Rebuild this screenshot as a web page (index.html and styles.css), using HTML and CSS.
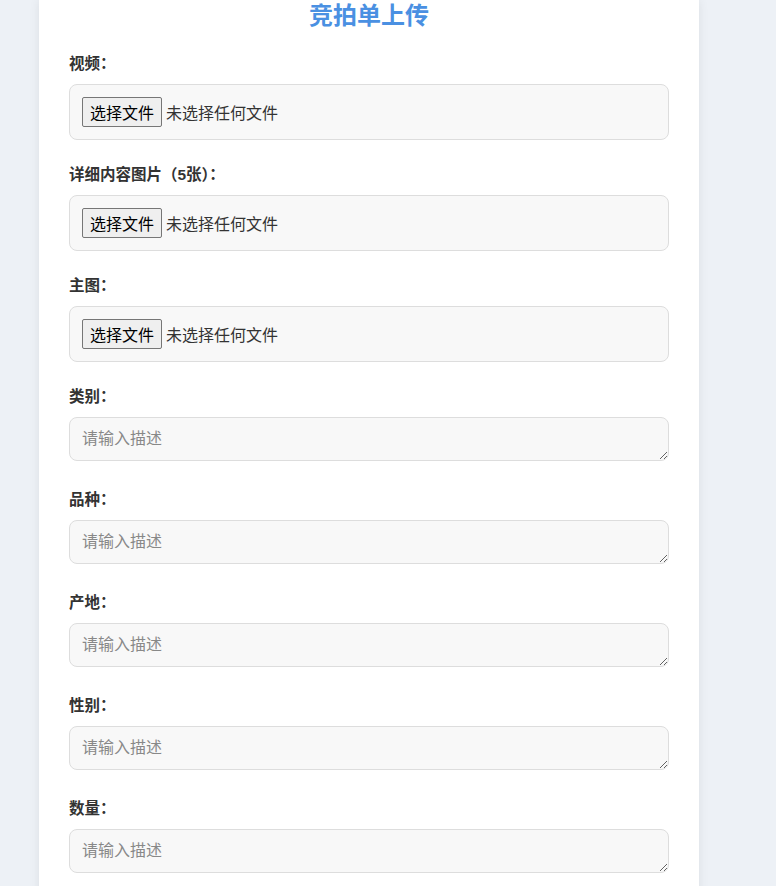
FILE: index.html
```html
<!DOCTYPE html>
<html lang="zh-CN">
<head>
    <meta charset="UTF-8">
    <meta name="viewport" content="width=device-width, initial-scale=1.0">
    <title>竞拍单上传</title>
    <link rel="stylesheet" href="styles.css">
</head>
<body>

    <div class="container">
        <h1>竞拍单上传</h1>

        <form class="upload-form">
            <!-- 文件上传 -->
            <div class="form-group">
                <label for="video">视频：</label>
                <div class="file-box">
                    <input type="file" id="video" accept="video/*">
                    <label for="video" class="file-btn">选择文件</label>
                    <span class="file-name">未选择任何文件</span>
                </div>
            </div>
            <div class="form-group">
                <label for="detail">详细内容图片（5张）：</label>
                <div class="file-box">
                    <input type="file" id="detail" accept="image/*" multiple>
                    <label for="detail" class="file-btn">选择文件</label>
                    <span class="file-name">未选择任何文件</span>
                </div>
            </div>
            <div class="form-group">
                <label for="cover">主图：</label>
                <div class="file-box">
                    <input type="file" id="cover" accept="image/*">
                    <label for="cover" class="file-btn">选择文件</label>
                    <span class="file-name">未选择任何文件</span>
                </div>
            </div>

            <!-- 文字描述 -->
            <div class="form-group">
                <label>类别：</label>
                <textarea placeholder="请输入描述"></textarea>
            </div>
            <div class="form-group">
                <label>品种：</label>
                <textarea placeholder="请输入描述"></textarea>
            </div>
            <div class="form-group">
                <label>产地：</label>
                <textarea placeholder="请输入描述"></textarea>
            </div>
            <div class="form-group">
                <label>性别：</label>
                <textarea placeholder="请输入描述"></textarea>
            </div>
            <div class="form-group">
                <label>数量：</label>
                <textarea placeholder="请输入描述"></textarea>
            </div>
        </form>
    </div>

</body>
</html>
```

FILE: styles.css
```css
/* 页面整体 */
body {
    margin: 0;
    background-color: #edf1f6;
    font-family: "Liberation Sans", "Noto Sans CJK SC", sans-serif;
    color: #333;
}

.container {
    width: 600px;
    margin-left: 39px;
    padding: 0 30px 30px;
    background-color: #fff;
    box-shadow: 0 0 10px rgba(0, 0, 0, 0.08);
}

h1 {
    margin: 0 0 22px;
    line-height: 32px;
    font-size: 24px;
    text-align: center;
    color: #4a90e2;
}

/* 表单项 */
.form-group {
    margin-bottom: 25px;
}

.form-group > label {
    display: block;
    margin-bottom: 10px;
    font-size: 15.5px;
    line-height: 20px;
    font-weight: bold;
    color: #333;
}

/* 文件选择框 */
.file-box {
    display: flex;
    align-items: center;
    height: 56px;
    box-sizing: border-box;
    padding: 0 12px;
    font-size: 16px;
    background-color: #f8f8f8;
    border: 1px solid #ddd;
    border-radius: 8px;
}

.file-box input[type="file"] {
    display: none;
}

.file-btn {
    display: flex;
    align-items: center;
    height: 30px;
    box-sizing: border-box;
    padding: 0 7px;
    margin-right: 4px;
    border: 1px solid #767676;
    border-radius: 2px;
    background-color: #efefef;
    color: #000;
    cursor: pointer;
}

.file-name {
    color: #333;
}

.form-group textarea {
    display: block;
    width: 100%;
    height: 44px;
    box-sizing: border-box;
    padding: 10px 12px;
    font-size: 16px;
    line-height: 22px;
    font-family: inherit;
    color: #333;
    background-color: #f8f8f8;
    border: 1px solid #ddd;
    border-radius: 8px;
    resize: vertical;
}

.form-group:has(textarea) {
    margin-bottom: 29px;
}

textarea::placeholder {
    color: #888;
}
```
